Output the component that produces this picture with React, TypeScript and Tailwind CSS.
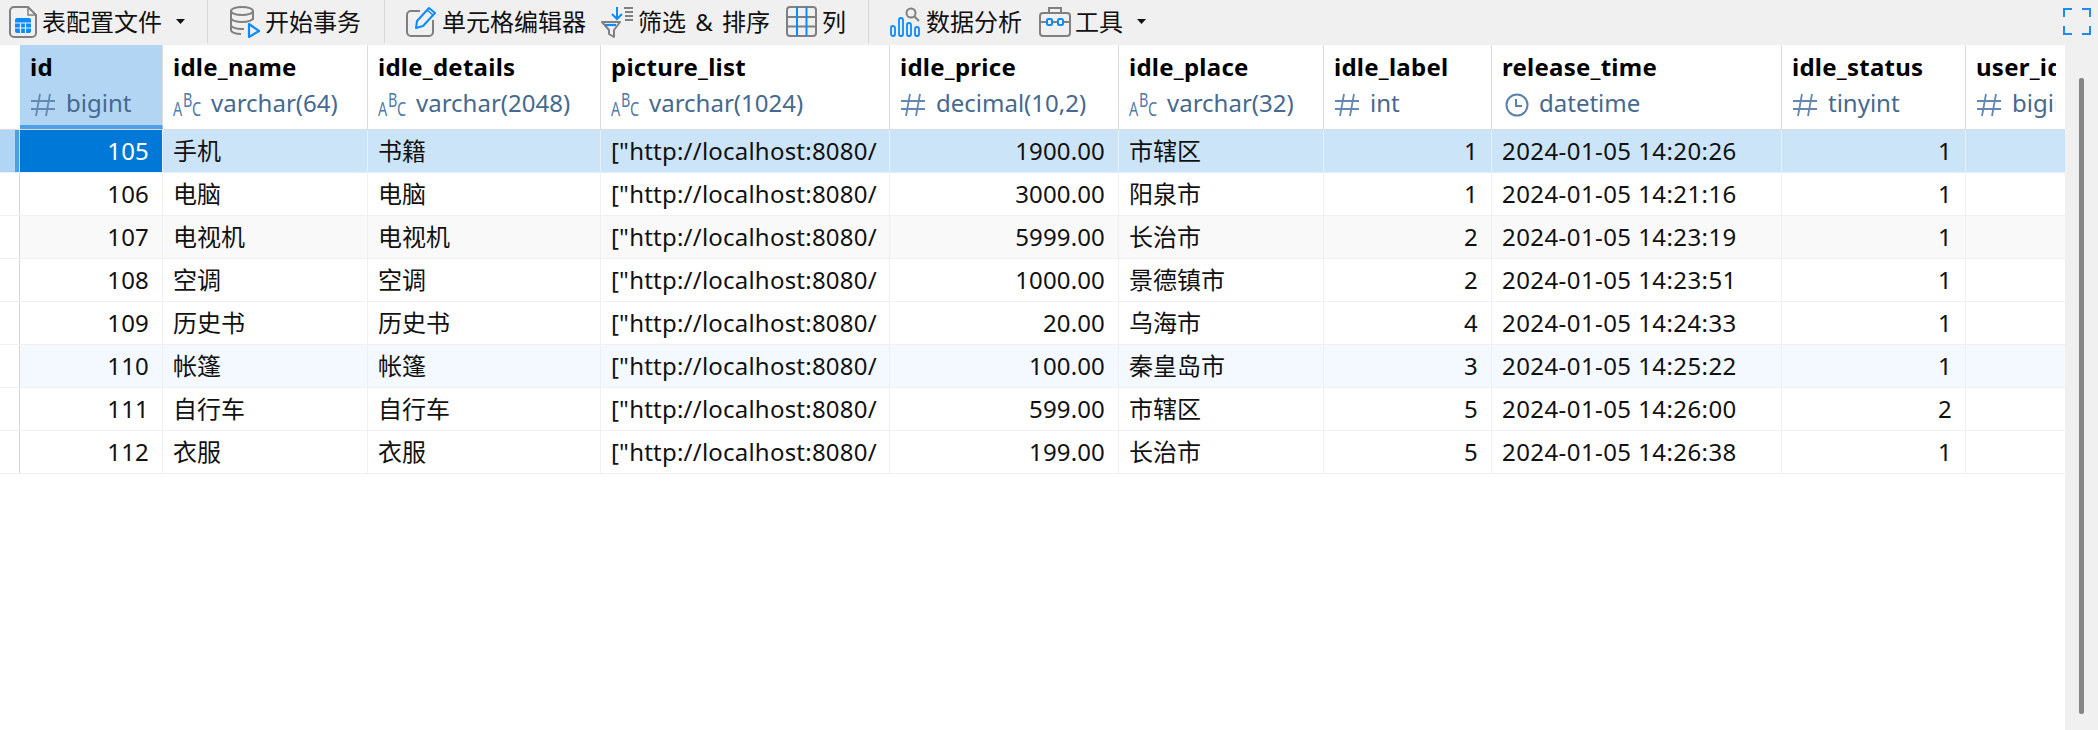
const columns = [
  { name: "id", type: "bigint", icon: "hash", width: 143 },
  { name: "idle_name", type: "varchar(64)", icon: "abc", width: 205 },
  { name: "idle_details", type: "varchar(2048)", icon: "abc", width: 233 },
  { name: "picture_list", type: "varchar(1024)", icon: "abc", width: 289 },
  { name: "idle_price", type: "decimal(10,2)", icon: "hash", width: 229 },
  { name: "idle_place", type: "varchar(32)", icon: "abc", width: 205 },
  { name: "idle_label", type: "int", icon: "hash", width: 168 },
  { name: "release_time", type: "datetime", icon: "clock", width: 290 },
  { name: "idle_status", type: "tinyint", icon: "hash", width: 184 },
  { name: "user_id", type: "bigint", icon: "hash", width: 100 },
]

const url = '["http://localhost:8080/'

const rows = [
  ["105", "手机", "书籍", url, "1900.00", "市辖区", "1", "2024-01-05 14:20:26", "1", ""],
  ["106", "电脑", "电脑", url, "3000.00", "阳泉市", "1", "2024-01-05 14:21:16", "1", ""],
  ["107", "电视机", "电视机", url, "5999.00", "长治市", "2", "2024-01-05 14:23:19", "1", ""],
  ["108", "空调", "空调", url, "1000.00", "景德镇市", "2", "2024-01-05 14:23:51", "1", ""],
  ["109", "历史书", "历史书", url, "20.00", "乌海市", "4", "2024-01-05 14:24:33", "1", ""],
  ["110", "帐篷", "帐篷", url, "100.00", "秦皇岛市", "3", "2024-01-05 14:25:22", "1", ""],
  ["111", "自行车", "自行车", url, "599.00", "市辖区", "5", "2024-01-05 14:26:00", "2", ""],
  ["112", "衣服", "衣服", url, "199.00", "长治市", "5", "2024-01-05 14:26:38", "1", ""],
]

const rightAligned = [0, 4, 6, 8, 9]

function Caret() {
  return (
    <svg width="9" height="5" viewBox="0 0 9 5" className="shrink-0">
      <path d="M0 0h9L4.5 5z" fill="#111" />
    </svg>
  )
}

function TableFileIcon() {
  return (
    <svg width="28" height="32" viewBox="0 0 28 32" fill="none" className="shrink-0">
      <path d="M5 1h14l8 8v18a4 4 0 0 1-4 4H5a4 4 0 0 1-4-4V5a4 4 0 0 1 4-4z" stroke="#808080" strokeWidth="2" />
      <path d="M19 1v8h8" stroke="#808080" strokeWidth="1.5" />
      <rect x="6" y="12" width="16" height="15" rx="2" fill="#0a8cff" />
      <path d="M6 17h16M6 22h16M11.5 17v10M16.5 17v10" stroke="#f0f0f0" strokeWidth="1.2" />
    </svg>
  )
}

function DatabaseIcon() {
  return (
    <svg width="30" height="32" viewBox="0 0 30 32" fill="none" className="shrink-0">
      <ellipse cx="12" cy="5" rx="11" ry="4" stroke="#808080" strokeWidth="2" />
      <path d="M1 5v19c0 2.2 4.5 4 10 4M23 5v9M1 12c0 2.2 5 4 11 4s11-1.800 11-4M1 19c0 2.200 5 4 11 4h2" stroke="#808080" strokeWidth="2" />
      <path d="M19 18l10 7-10 6z" stroke="#0a8cff" strokeWidth="2.2" strokeLinejoin="round" />
    </svg>
  )
}

function EditIcon() {
  return (
    <svg width="30" height="31" viewBox="0 0 30 31" fill="none" className="shrink-0">
      <path d="M14 5H5a4 4 0 0 0-4 4v17a4 4 0 0 0 4 4h18a4 4 0 0 0 4-4V14" stroke="#808080" strokeWidth="2" />
      <path d="M10 22l1-7L23 2l6 5-12 13z" stroke="#0a8cff" strokeWidth="2" strokeLinejoin="round" />
      <path d="M21 4l6 5" stroke="#0a8cff" strokeWidth="1.500" />
    </svg>
  )
}

function FilterIcon() {
  return (
    <svg width="32" height="32" viewBox="0 0 32 32" fill="none" className="shrink-0">
      <path d="M16 1v11M11 8l5 5 5-5" stroke="#0a8cff" strokeWidth="2" />
      <path d="M23 2h9M24 6h8M24 10h8M24 14h8" stroke="#808080" strokeWidth="1.800" />
      <path d="M1 16h18l-6 8v7l-5-3v-4z" stroke="#808080" strokeWidth="2" strokeLinejoin="round" />
      <path d="M4 19h11" stroke="#0a8cff" strokeWidth="2.200" />
    </svg>
  )
}

function ColumnsIcon() {
  return (
    <svg width="31" height="31" viewBox="0 0 31 31" fill="none" className="shrink-0">
      <rect x="1" y="1" width="29" height="29" rx="3" stroke="#808080" strokeWidth="2" />
      <path d="M1 11h29M1 20.500h29" stroke="#808080" strokeWidth="2" />
      <path d="M11 1v29M20.500 1v29" stroke="#0a8cff" strokeWidth="2" />
    </svg>
  )
}

function AnalysisIcon() {
  return (
    <svg width="31" height="30" viewBox="0 0 31 30" fill="none" className="shrink-0">
      <rect x="1" y="19" width="4" height="10" rx="2" stroke="#0a8cff" strokeWidth="1.800" />
      <rect x="9" y="11" width="4" height="18" rx="2" stroke="#0a8cff" strokeWidth="1.800" />
      <rect x="17" y="16" width="4" height="13" rx="2" stroke="#0a8cff" strokeWidth="1.800" />
      <rect x="25" y="20" width="4" height="9" rx="2" stroke="#0a8cff" strokeWidth="1.800" />
      <circle cx="21" cy="6" r="4.500" stroke="#808080" strokeWidth="2" />
      <path d="M24.500 9.500l4.500 4.500" stroke="#808080" strokeWidth="2" />
    </svg>
  )
}

function ToolboxIcon() {
  return (
    <svg width="32" height="30" viewBox="0 0 32 30" fill="none" className="shrink-0">
      <rect x="1" y="6" width="30" height="23" rx="3" stroke="#808080" strokeWidth="2" />
      <path d="M10 6V1h12v5" stroke="#808080" strokeWidth="2" />
      <path d="M1 15h6M14 15h4M25 15h6" stroke="#808080" strokeWidth="2" />
      <rect x="8" y="12" width="5" height="6" rx="1.500" stroke="#0a8cff" strokeWidth="2" />
      <rect x="19" y="12" width="5" height="6" rx="1.500" stroke="#0a8cff" strokeWidth="2" />
    </svg>
  )
}

function FullscreenIcon() {
  return (
    <svg width="28" height="27" viewBox="0 0 28 27" fill="none">
      <path d="M1 9V1h8M19 1h8v8M27 18v8h-8M9 26H1v-8" stroke="#1a8cff" strokeWidth="2" />
    </svg>
  )
}

function TypeIcon({ icon }: { icon: string }) {
  if (icon === "abc") {
    return (
      <span className="flex w-[28px] h-[24px] shrink-0 items-start text-[20px] leading-none text-[#4f78a8]">
        <span className="w-[9.500px] mt-[8px] scale-x-[0.72] origin-left">A</span>
        <span className="w-[9px] -mt-[1px] scale-x-[0.72] origin-left">B</span>
        <span className="w-[9px] mt-[8px] scale-x-[0.72] origin-left">C</span>
      </span>
    )
  }
  if (icon === "clock") {
    return (
      <svg width="24" height="24" viewBox="0 0 24 24" fill="none" className="shrink-0 ml-[3px] mt-[3px]">
        <circle cx="12" cy="12" r="10.500" stroke="#5a80ab" strokeWidth="2" />
        <path d="M11 6v7h6" stroke="#5a80ab" strokeWidth="2" />
      </svg>
    )
  }
  return (
    <svg width="26" height="24" viewBox="0 0 26 24" fill="none" className="shrink-0 mt-[3px]">
      <path d="M1 8h24M1 16h24M10 1L6 23M20 1l-4 22" stroke="#6288b3" strokeWidth="1.800" />
    </svg>
  )
}

function ToolItem({ icon, label, caret, className, labelClass }: { icon: React.ReactNode; label: string; caret?: boolean; className: string; labelClass?: string }) {
  return (
    <div className={"flex items-center " + className}>
      {icon}
      <span className={"text-[24px] leading-none whitespace-nowrap text-[#111] " + (labelClass ?? "ml-[6px]")}>{label}</span>
      {caret && <span className="ml-[14px] flex"><Caret /></span>}
    </div>
  )
}

export default function App() {
  return (
    <div className="w-[2098px] h-[730px] flex flex-col bg-white overflow-hidden font-['Noto_Sans','Noto_Sans_CJK_SC',sans-serif]">
      <div className="h-[45px] bg-[#f0f0f0] flex items-center shrink-0 pb-[2px]">
        <ToolItem icon={<TableFileIcon />} label="表配置文件" caret className="ml-[9px]" labelClass="ml-[5px]" />
        <div className="w-px h-[43px] bg-[#d9d9d9] ml-[22px]" />
        <ToolItem icon={<DatabaseIcon />} label="开始事务" className="ml-[22px]" labelClass="ml-[5px]" />
        <div className="w-px h-[43px] bg-[#d9d9d9] ml-[23px]" />
        <ToolItem icon={<EditIcon />} label="单元格编辑器" className="ml-[21px]" />
        <ToolItem icon={<FilterIcon />} label="筛选 & 排序" className="ml-[15px]" labelClass="ml-[5px] [word-spacing:3px]" />
        <ToolItem icon={<ColumnsIcon />} label="列" className="ml-[16px]" labelClass="ml-[5px]" />
        <div className="w-px h-[43px] bg-[#d9d9d9] ml-[22px]" />
        <ToolItem icon={<AnalysisIcon />} label="数据分析" className="ml-[21px]" labelClass="ml-[5px]" />
        <ToolItem icon={<ToolboxIcon />} label="工具" caret className="ml-[17px]" labelClass="ml-[4px]" />
        <div className="ml-auto mr-[7px] flex">
          <FullscreenIcon />
        </div>
      </div>

      <div className="flex flex-1 min-h-0">
        <div className="w-[2065px] overflow-hidden">
          <div className="flex h-[85px] border-b border-[#dcdcdc]">
            <div className="w-[20px] shrink-0" />
            {columns.map((col, i) => (
              <div
                key={col.name}
                style={{ width: col.width }}
                className={
                  i === 0
                    ? "shrink-0 bg-[#b1d5f2] border-r border-[#dcdcdc] border-b-4 border-b-[#4ca0e8] h-[84px] pl-[10px] pt-[6px]"
                    : i === 9
                    ? "shrink-0 pl-[10px] pt-[6px] pr-[10px]"
                    : "shrink-0 border-r border-[#dcdcdc] pl-[10px] pt-[6px]"
                }
              >
                <div className="overflow-hidden h-[72px]">
                  <div className="text-[24px] leading-[32px] font-bold tracking-[0.25px] text-black whitespace-nowrap">{col.name}</div>
                  <div className="flex items-center h-[30px] mt-[5px] whitespace-nowrap">
                    <TypeIcon icon={col.icon} />
                    <span className="ml-[10px] text-[24px] leading-none text-[#45698f]">{col.type}</span>
                  </div>
                </div>
              </div>
            ))}
          </div>

          {rows.map((row, r) => (
            <div
              key={row[0]}
              className={
                "flex h-[43px] border-b " +
                (r === 0
                  ? "bg-[#cce4f7] border-[#e6f1fb]"
                  : r === 2
                  ? "bg-[#f9f9f9] border-[#f0f0f0]"
                  : r === 5
                  ? "bg-[#f3f9fe] border-[#f0f0f0]"
                  : "bg-white border-[#f0f0f0]")
              }
            >
              <div className={"w-[20px] shrink-0 border-r border-[#d8d8d8] flex " + (r === 0 ? "bg-[#b1d5f2]" : "bg-white")}>
                {r === 0 && <div className="ml-[15px] w-[4px] bg-[#4ca0e8]" />}
              </div>
              {row.map((cell, c) => (
                <div
                  key={c}
                  style={{ width: columns[c].width }}
                  className={
                    "shrink-0 flex items-center whitespace-nowrap text-[24px] leading-none border-r " +
                    (rightAligned.includes(c) ? "justify-end pr-[13px] tracking-[0.15px] " : "pl-[10px] ") +
                    (c === 3 ? "tracking-[0.22px] " : "") +
                    (c === 7 ? "tracking-[0.42px] " : "") +
                    (r === 0 ? "border-[#e6f1fb] " : "border-[#f0f0f0] ") +
                    (r === 0 && c === 0 ? "bg-[#0078d7] text-white" : "text-[#111]")
                  }
                >
                  {cell}
                </div>
              ))}
            </div>
          ))}
        </div>

        <div className="flex-1 bg-[#f0f0f0] pl-[14px] pt-[33px] pb-[16px]">
          <div className="w-[5px] h-full bg-[#858585] rounded-[2px]" />
        </div>
      </div>
    </div>
  )
}
